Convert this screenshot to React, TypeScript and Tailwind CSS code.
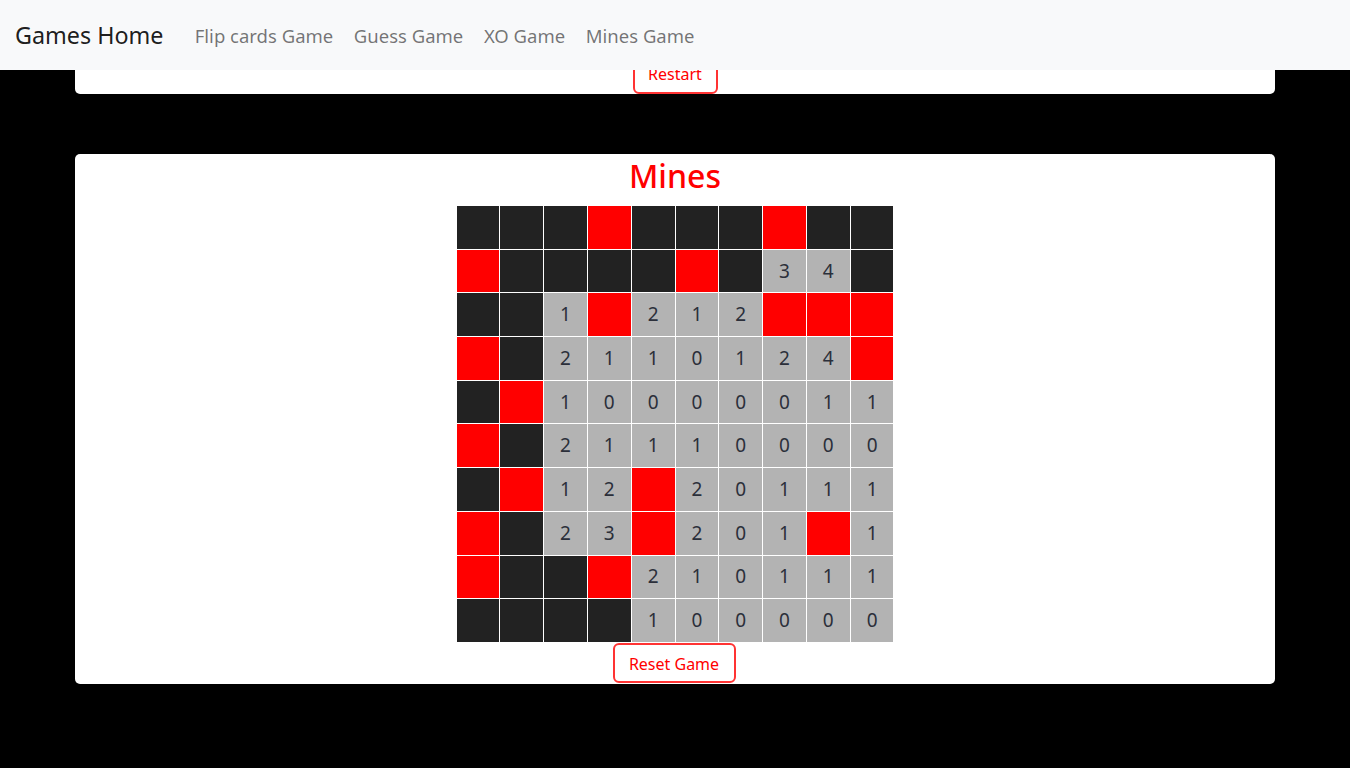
import React from "react";

const rows = [
  "DDDRDDDRDD",
  "RDDDDRD34D",
  "DD1R212RRR",
  "RD2110124R",
  "DR10000011",
  "RD21110000",
  "DR12R20111",
  "RD23R201R1",
  "RDDR210111",
  "DDDD100000",
];

export default function App() {
  return (
    <div className="min-h-[768px] bg-black" style={{ fontFamily: '"Noto Sans", "Open Sans", sans-serif' }}>
      <nav className="h-[70px] bg-[#f8f9fa] flex items-center px-[15px] pt-[2px]">
        <span className="text-[23.3px] text-[rgba(0,0,0,0.9)] mr-[21px] leading-none">Games Home</span>
        <div className="flex items-center text-[18.5px] text-[rgba(0,0,0,0.55)] leading-none">
          <span className="px-[10.3px]">Flip cards Game</span>
          <span className="px-[10.3px]">Guess Game</span>
          <span className="px-[10.3px]">XO Game</span>
          <span className="px-[10.3px]">Mines Game</span>
        </div>
      </nav>
      <div className="w-[1200px] mx-auto">
        <div className="h-[24px] bg-white rounded-b-[5px] overflow-hidden flex justify-center items-end">
          <button className="shrink-0 h-[40px] w-[85px] border-2 border-[#f33] rounded-[6px] text-[#f00] text-[16px] leading-none">
            Restart
          </button>
        </div>
        <div className="mt-[60px] bg-white rounded-[5px] flex flex-col items-center h-[530px]">
          <h2 className="text-[#f00] text-[32px] font-medium h-[52px] leading-[44px]">Mines</h2>
          <div className="grid grid-cols-[repeat(10,42.8px)] grid-rows-[repeat(10,42.7px)] gap-px bg-white">
            {rows.flatMap((r, i) =>
              r.split("").map((c, j) => {
                const cls =
                  c === "D"
                    ? "bg-[#222222]"
                    : c === "R"
                    ? "bg-[#ff0000]"
                    : "bg-[#b3b3b3] text-[#2b2f3a]";
                return (
                  <div key={i + "-" + j} className={`${cls} flex items-center justify-center text-[19px] leading-none`}>
                    {c === "D" || c === "R" ? "" : c}
                  </div>
                );
              })
            )}
          </div>
          <button className="mt-[1px] h-[40px] w-[123px] border-2 border-[#f33] rounded-[6px] text-[#f00] text-[16px] leading-none -translate-x-px pt-[2px]">
            Reset Game
          </button>
        </div>
      </div>
    </div>
  );
}
